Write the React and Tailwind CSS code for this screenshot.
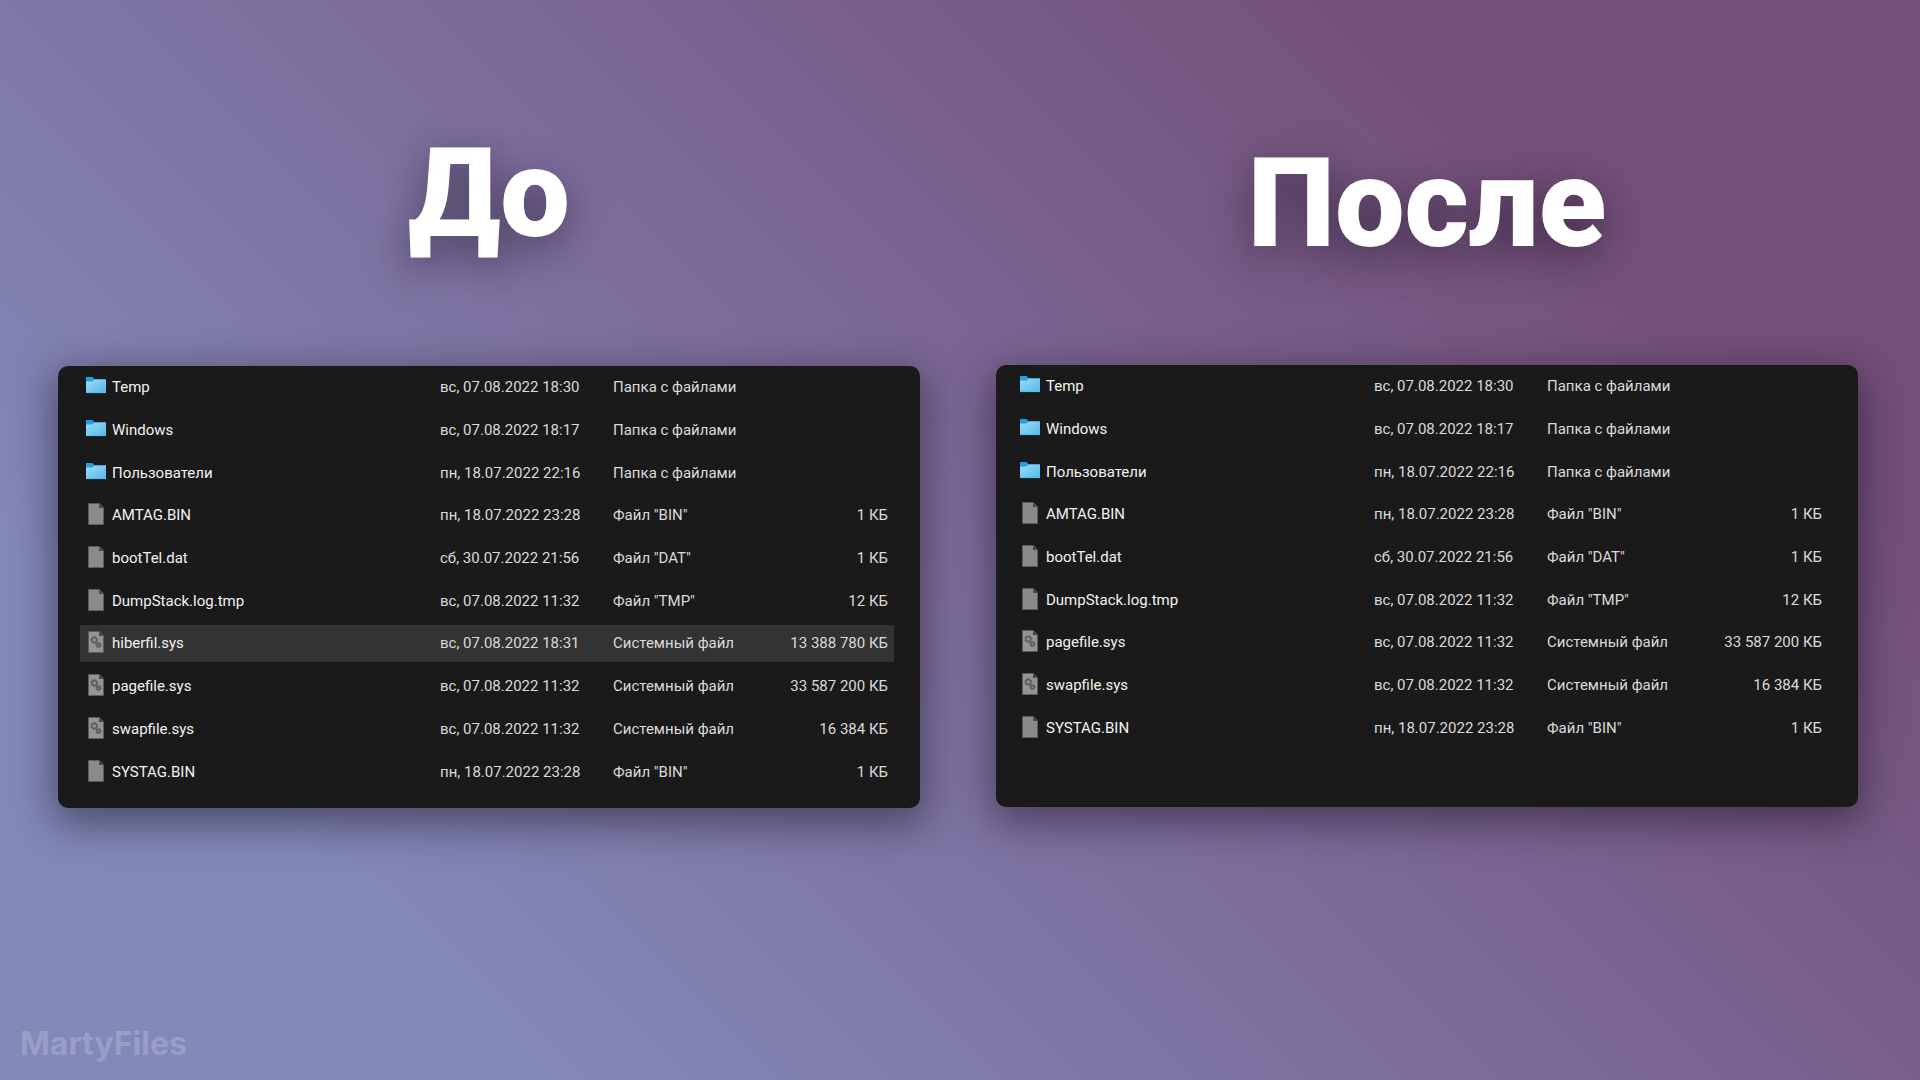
import React from "react";

const FOLDER = "Папка с файлами";
const SYSTEM = "Системный файл";

const shared = [
  { icon: "folder", name: "Temp", date: "вс, 07.08.2022 18:30", type: FOLDER, size: "" },
  { icon: "folder", name: "Windows", date: "вс, 07.08.2022 18:17", type: FOLDER, size: "" },
  { icon: "folder", name: "Пользователи", date: "пн, 18.07.2022 22:16", type: FOLDER, size: "" },
  { icon: "file", name: "AMTAG.BIN", date: "пн, 18.07.2022 23:28", type: "Файл \"BIN\"", size: "1 КБ" },
  { icon: "file", name: "bootTel.dat", date: "сб, 30.07.2022 21:56", type: "Файл \"DAT\"", size: "1 КБ" },
  { icon: "file", name: "DumpStack.log.tmp", date: "вс, 07.08.2022 11:32", type: "Файл \"TMP\"", size: "12 КБ" },
];

const tail = [
  { icon: "system", name: "pagefile.sys", date: "вс, 07.08.2022 11:32", type: SYSTEM, size: "33 587 200 КБ" },
  { icon: "system", name: "swapfile.sys", date: "вс, 07.08.2022 11:32", type: SYSTEM, size: "16 384 КБ" },
  { icon: "file", name: "SYSTAG.BIN", date: "пн, 18.07.2022 23:28", type: "Файл \"BIN\"", size: "1 КБ" },
];

const hibernation = {
  icon: "system",
  name: "hiberfil.sys",
  date: "вс, 07.08.2022 18:31",
  type: SYSTEM,
  size: "13 388 780 КБ",
  selected: true,
};

const before = [...shared, hibernation, ...tail];
const after = [...shared, ...tail];

function FolderIcon() {
  return (
    <svg width="20" height="17" viewBox="0 0 20 17" aria-hidden="true">
      <defs>
        <linearGradient id="folder" x1="0" y1="0" x2="1" y2="1">
          <stop offset="0" stopColor="#9edcf5" />
          <stop offset="1" stopColor="#52b8e8" />
        </linearGradient>
      </defs>
      <path d="M0 0h6.5l2 2.2H20V8H0z" fill="#1fa0e2" />
      <path d="M0 4.6h6.2L8.6 2.6H20V16H0z" fill="url(#folder)" />
      <path d="M0 15.2h20v.9H0z" fill="#4fc0f2" />
    </svg>
  );
}

function FileIcon({ system }) {
  return (
    <svg width="16" height="22" viewBox="0 0 16 22" aria-hidden="true">
      <path d="M.5.5h10.7l4.3 4.3v16.7H.5z" fill={system ? "#949494" : "#8a8a8a"} stroke="#5c5c5c" />
      <path d="M11 .5v4.500h4.500z" fill="#484848" />
      {system && (
        <g fill="none" stroke="#555d66">
          <circle cx="6.300" cy="9" r="2.400" strokeWidth="1.500" />
          <circle cx="6.300" cy="9" r="3.500" strokeWidth="1" strokeDasharray="1.400 1.350" />
          <circle cx="10.500" cy="14" r="1.700" strokeWidth="1.700" />
          <circle cx="10.500" cy="14" r="2.700" strokeWidth=".8" strokeDasharray="1.100 1" />
        </g>
      )}
    </svg>
  );
}

function Row({ item }) {
  const fill = item.selected ? "bg-[#333333]" : "";
  const cell = `border-y-[3px] border-transparent bg-clip-padding p-0 align-middle whitespace-nowrap ${fill}`;
  return (
    <tr className="h-[42px]">
      <td className={`${cell} rounded-l text-[#f2f2f2]`}>
        <div className="flex items-center pl-1">
          <span className={`flex w-[28px] shrink-0 ${item.icon === "folder" ? "pb-[3px] pl-[2px]" : "pb-[2px] pl-1"}`}>
            {item.icon === "folder" ? <FolderIcon /> : <FileIcon system={item.icon === "system"} />}
          </span>
          {item.name}
        </div>
      </td>
      <td className={cell}>{item.date}</td>
      <td className={cell}>{item.type}</td>
      <td className={`${cell} rounded-r pr-[6px] text-right`}>{item.size}</td>
    </tr>
  );
}

function FileTable({ label, items, className }) {
  return (
    <div
      className={`rounded-[10px] bg-[#1a1a1a] shadow-[0_12px_40px_4px_rgba(25,15,30,0.5)] ${className}`}
    >
      <table
        aria-label={label}
        className={`w-full table-fixed border-separate border-spacing-0 font-['Roboto',sans-serif] text-[15px] leading-5 text-[#dadada] ${
          items.length === 10 ? "h-[427px]" : "h-[384px]"
        }`}
      >
        <colgroup>
          <col />
          <col className="w-[173px]" />
          <col className="w-[141px]" />
          <col className="w-[140px]" />
        </colgroup>
        <tbody>
          {items.map((item) => (
            <Row key={item.name} item={item} />
          ))}
        </tbody>
      </table>
    </div>
  );
}

const heading =
  "text-center font-['Roboto',sans-serif] text-[124px] leading-[124px] font-black text-white [text-shadow:0_12px_40px_rgba(25,15,30,0.55)]";

export default function App() {
  return (
    <div className="flex min-h-screen flex-col justify-between bg-[linear-gradient(45deg,#8288b8_18%,#7b6694_56%,#734f79_82%)]">
      <main className="grid grid-cols-2 gap-x-[76px] pr-[62px] pl-[58px]">
        <section>
          <h1 className={`${heading} pt-[132px]`}>До</h1>
          <FileTable label="До" items={before} className="mt-[110px] pr-[26px] pb-[15px] pl-[22px]" />
        </section>
        <section>
          <h1 className={`${heading} pt-[142px]`}>После</h1>
          <FileTable label="После" items={after} className="mt-[99px] pr-[30px] pb-[58px] pl-[18px]" />
        </section>
      </main>
      <footer className="px-5 pb-[16px] font-['Inter',sans-serif] text-[32px] leading-10 font-bold text-white/20">
        MartyFiles
      </footer>
    </div>
  );
}
